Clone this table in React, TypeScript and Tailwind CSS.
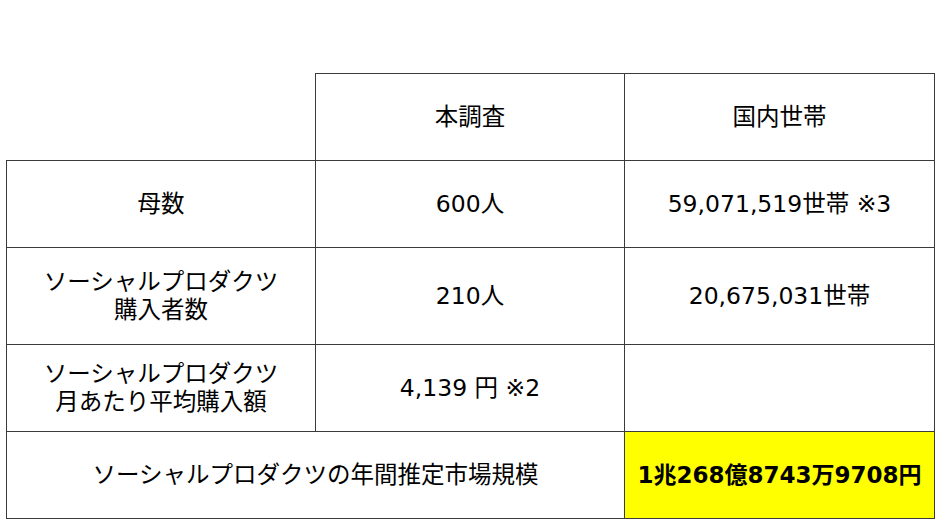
const font = "font-['DejaVu_Sans','Noto_Sans_CJK_JP',sans-serif]";

const cell = "border border-[#3a3a3a] text-center align-middle p-0";

export default function App() {
  return (
    <div className={`w-[940px] h-[529px] bg-white text-black ${font} text-[23.5px] leading-[28px]`}>
      <div className="pt-[73px] pl-[6px]">
        <table className="border-collapse table-fixed w-[928px]">
          <colgroup>
            <col className="w-[309px]" />
            <col className="w-[309px]" />
            <col className="w-[310px]" />
          </colgroup>
          <tbody>
            <tr className="h-[87px]">
              <td className="border-r border-b border-[#3a3a3a] p-0"></td>
              <td className={cell}>本調査</td>
              <td className={cell}>国内世帯</td>
            </tr>
            <tr className="h-[87px]">
              <td className={cell}>母数</td>
              <td className={cell}>600人</td>
              <td className={cell}>59,071,519世帯 ※3</td>
            </tr>
            <tr className="h-[97px]">
              <td className={cell}>
                ソーシャルプロダクツ
                <br />
                購入者数
              </td>
              <td className={cell}>210人</td>
              <td className={cell}>20,675,031世帯</td>
            </tr>
            <tr className="h-[87px]">
              <td className={cell}>
                ソーシャルプロダクツ
                <br />
                月あたり平均購入額
              </td>
              <td className={cell}>4,139 円 ※2</td>
              <td className={cell}></td>
            </tr>
            <tr className="h-[87px]">
              <td className={cell} colSpan={2}>
                ソーシャルプロダクツの年間推定市場規模
              </td>
              <td className={`${cell} bg-[#ffff00] font-bold text-[23px]`}>
                1兆268億8743万9708円
              </td>
            </tr>
          </tbody>
        </table>
      </div>
    </div>
  );
}
